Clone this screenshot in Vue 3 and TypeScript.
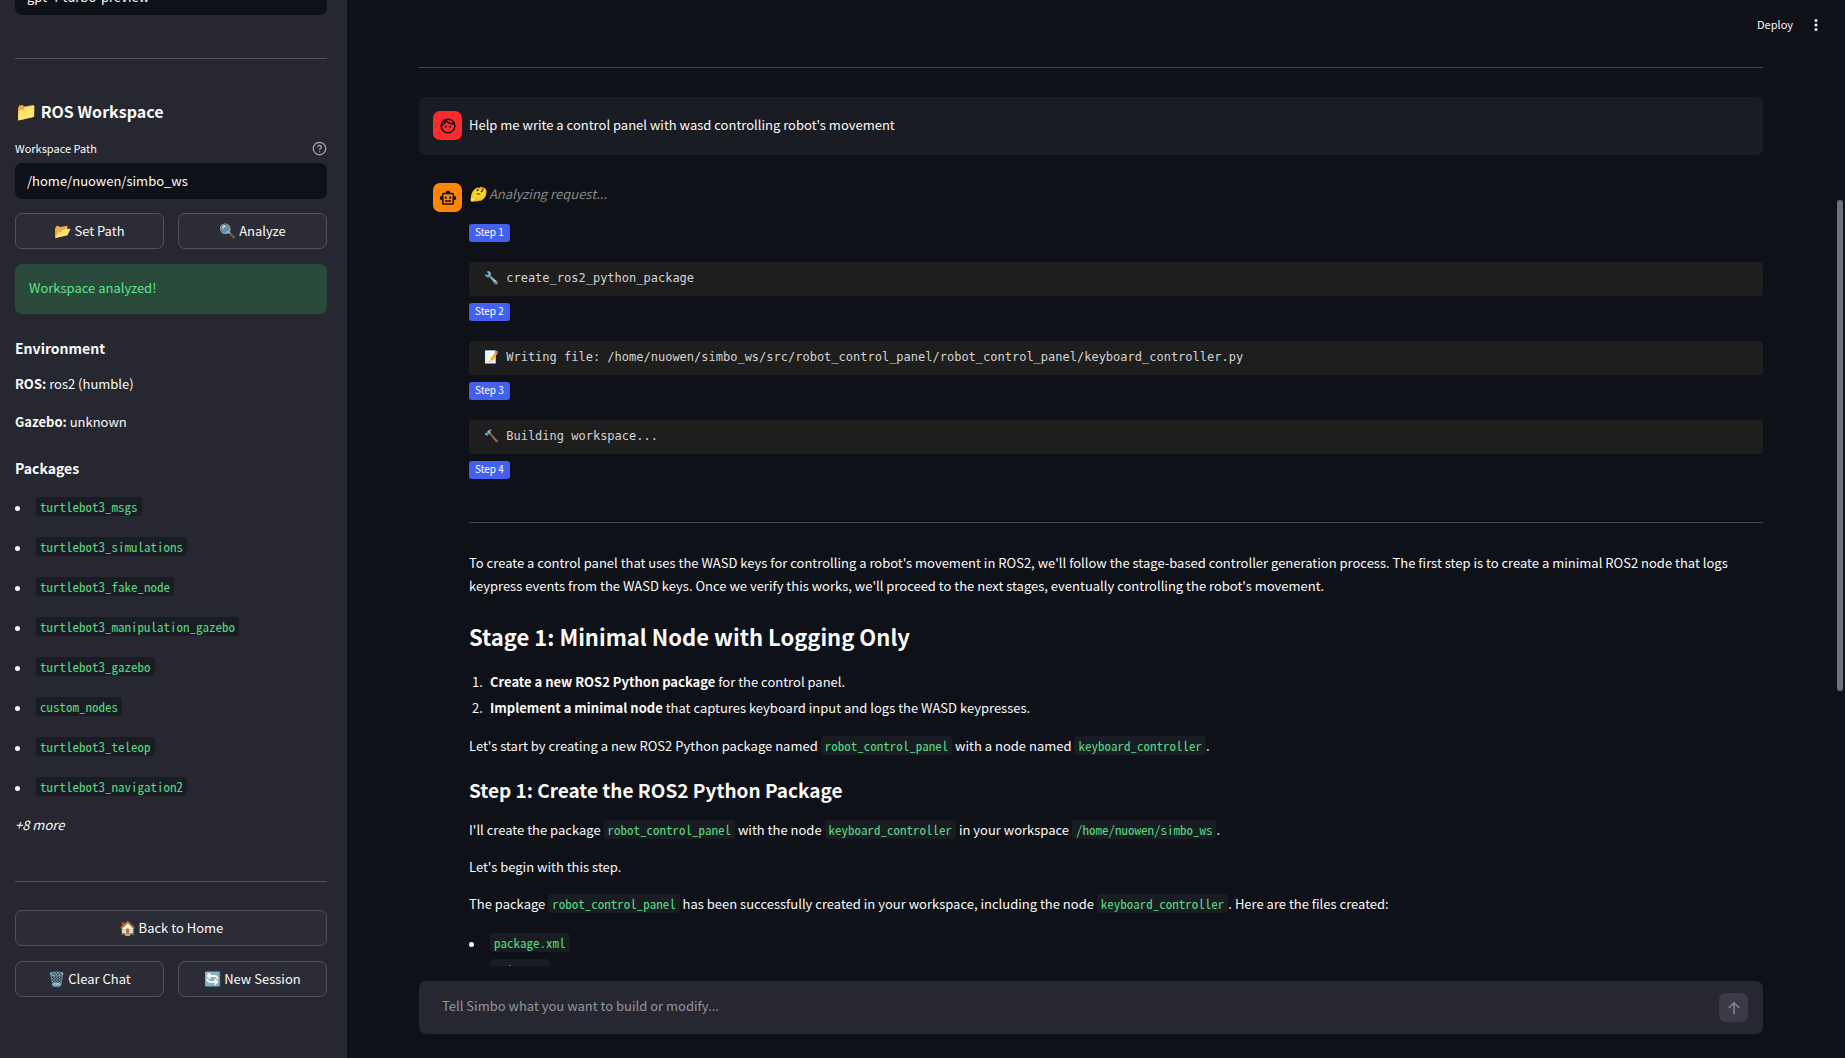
<script setup lang="ts">
import { ref } from 'vue'

interface Step {
  label: string
  icon?: string
  text?: string
}

const model = ref('gpt-4-turbo-preview')
const workspacePath = ref('/home/nuowen/simbo_ws')
const prompt = ref('')

const packages: string[] = [
  'turtlebot3_msgs',
  'turtlebot3_simulations',
  'turtlebot3_fake_node',
  'turtlebot3_manipulation_gazebo',
  'turtlebot3_gazebo',
  'custom_nodes',
  'turtlebot3_teleop',
  'turtlebot3_navigation2',
]

const steps: Step[] = [
  { label: 'Step 1', icon: '🔧', text: 'create_ros2_python_package' },
  {
    label: 'Step 2',
    icon: '📝',
    text: 'Writing file: /home/nuowen/simbo_ws/src/robot_control_panel/robot_control_panel/keyboard_controller.py',
  },
  { label: 'Step 3', icon: '🔨', text: 'Building workspace...' },
  { label: 'Step 4' },
]

const files: string[] = ['package.xml', 'setup.py']
</script>

<template>
  <div class="app">
    <aside class="sidebar">
      <select v-model="model" class="field model" aria-label="Model">
        <option>gpt-4-turbo-preview</option>
      </select>
      <hr />
      <h3><span class="emoji-lg">📁</span> ROS Workspace</h3>
      <div class="label-row">
        <label for="ws-path">Workspace Path</label>
        <svg class="help" viewBox="0 0 24 24" fill="none" stroke="currentColor" stroke-width="2" stroke-linecap="round" stroke-linejoin="round">
          <circle cx="12" cy="12" r="10" />
          <path d="M9.09 9a3 3 0 0 1 5.83 1c0 2-3 3-3 3" />
          <path d="M12 17h.01" />
        </svg>
      </div>
      <input id="ws-path" v-model="workspacePath" class="field" type="text" />
      <div class="button-row">
        <button type="button"><span class="emoji">📂</span> Set Path</button>
        <button type="button"><span class="emoji">🔍</span> Analyze</button>
      </div>
      <div class="success" role="status">Workspace analyzed!</div>
      <h4>Environment</h4>
      <p><strong>ROS:</strong> ros2 (humble)</p>
      <p><strong>Gazebo:</strong> unknown</p>
      <h4>Packages</h4>
      <ul class="packages">
        <li v-for="name in packages" :key="name"><code>{{ name }}</code></li>
      </ul>
      <p class="more"><em>+8 more</em></p>
      <hr class="footer-rule" />
      <div class="button-row">
        <button type="button"><span class="emoji">🏠</span> Back to Home</button>
      </div>
      <div class="button-row">
        <button type="button"><span class="emoji">🗑️</span> Clear Chat</button>
        <button type="button"><span class="emoji">🔄</span> New Session</button>
      </div>
    </aside>

    <main class="main">
      <header class="toolbar">
        <button type="button" class="deploy">Deploy</button>
        <button type="button" class="menu" aria-label="Menu">
          <svg viewBox="0 0 24 24" fill="currentColor">
            <circle cx="12" cy="6" r="2" />
            <circle cx="12" cy="12" r="2" />
            <circle cx="12" cy="18" r="2" />
          </svg>
        </button>
      </header>

      <section class="chat">
        <hr class="top-rule" />

        <article class="message user">
          <div class="avatar red">
            <svg viewBox="0 0 24 24" fill="currentColor">
              <path d="M10.25 13c0 .69-.56 1.25-1.25 1.25S7.75 13.69 7.75 13s.56-1.25 1.25-1.25 1.25.56 1.25 1.25zM15 11.75c-.69 0-1.25.56-1.25 1.25s.56 1.25 1.25 1.25 1.25-.56 1.25-1.25-.56-1.25-1.25-1.25zm7 .25c0 5.52-4.48 10-10 10S2 17.52 2 12 6.48 2 12 2s10 4.48 10 10zM10.66 4.12C12.06 6.44 14.6 8 17.5 8c.46 0 .91-.05 1.34-.12C17.44 5.56 14.9 4 12 4c-.46 0-.91.05-1.34.12zM4.42 9.47c1.71-.97 3.03-2.55 3.66-4.44C6.37 6 5.05 7.58 4.42 9.47zM20 12c0-.78-.12-1.53-.33-2.24-.7.15-1.42.24-2.17.24-3.13 0-5.92-1.44-7.76-3.69C8.69 8.87 6.6 10.88 4 11.86c.01.04 0 .09 0 .14 0 4.42 3.58 8 8 8s8-3.58 8-8z" />
            </svg>
          </div>
          <div class="body">
            <p>Help me write a control panel with wasd controlling robot's movement</p>
          </div>
        </article>

        <article class="message">
          <div class="avatar orange">
            <svg viewBox="0 0 24 24" fill="currentColor">
              <path d="M20 9V7c0-1.1-.9-2-2-2h-3c0-1.66-1.34-3-3-3S9 3.34 9 5H6c-1.1 0-2 .9-2 2v2c-1.66 0-3 1.34-3 3s1.34 3 3 3v4c0 1.1.9 2 2 2h12c1.1 0 2-.9 2-2v-4c1.66 0 3-1.34 3-3s-1.34-3-3-3zm-2 10H6V7h12v12zm-9-6c-.83 0-1.5-.67-1.5-1.5S8.17 10 9 10s1.5.67 1.5 1.5S9.83 13 9 13zm7.5-1.5c0 .83-.67 1.5-1.5 1.5s-1.5-.67-1.5-1.5.67-1.5 1.5-1.5 1.5.67 1.5 1.5zM8 15h8v2H8v-2z" />
            </svg>
          </div>
          <div class="body">
            <p class="thinking"><span class="emoji">🤔</span> Analyzing request...</p>
            <div v-for="step in steps" :key="step.label" class="step">
              <span class="badge">{{ step.label }}</span>
              <div v-if="step.text" class="tool"><span class="tool-icon">{{ step.icon }}</span> {{ step.text }}</div>
            </div>
            <hr />
            <p>
              To create a control panel that uses the WASD keys for controlling a robot's movement in ROS2, we'll follow
              the stage-based controller generation process. The first step is to create a minimal ROS2 node that logs
              keypress events from the WASD keys. Once we verify this works, we'll proceed to the next stages, eventually
              controlling the robot's movement.
            </p>
            <h2>Stage 1: Minimal Node with Logging Only</h2>
            <ol>
              <li><strong>Create a new ROS2 Python package</strong> for the control panel.</li>
              <li><strong>Implement a minimal node</strong> that captures keyboard input and logs the WASD keypresses.</li>
            </ol>
            <p>
              Let's start by creating a new ROS2 Python package named <code>robot_control_panel</code> with a node named
              <code>keyboard_controller</code>.
            </p>
            <h3>Step 1: Create the ROS2 Python Package</h3>
            <p>
              I'll create the package <code>robot_control_panel</code> with the node
              <code>keyboard_controller</code> in your workspace <code>/home/nuowen/simbo_ws</code>.
            </p>
            <p>Let's begin with this step.</p>
            <p>
              The package <code>robot_control_panel</code> has been successfully created in your workspace, including
              the node <code>keyboard_controller</code>. Here are the files created:
            </p>
            <ul>
              <li v-for="file in files" :key="file"><code>{{ file }}</code></li>
            </ul>
          </div>
        </article>
      </section>

      <form class="composer" @submit.prevent>
        <div class="composer-box">
          <input v-model="prompt" type="text" aria-label="Message" placeholder="Tell Simbo what you want to build or modify..." />
          <button type="submit" class="send" aria-label="Send" disabled>
            <svg viewBox="0 0 24 24" fill="none" stroke="currentColor" stroke-width="2">
              <path d="M12 20V5M5 12l7-7 7 7" />
            </svg>
          </button>
        </div>
      </form>
      <div class="scroll-thumb"></div>
    </main>
  </div>
</template>

<style>
body {
  margin: 0;
  background: #0e1117;
}
</style>

<style scoped>
* {
  box-sizing: border-box;
}

.app {
  display: flex;
  height: 100vh;
  overflow: hidden;
  background: #0e1117;
  color: #fafafa;
  font-family: 'Noto Sans CJK SC', 'Noto Sans', sans-serif;
  font-size: 13px;
  line-height: 23px;
}

h2,
h3,
h4,
p,
ul,
ol {
  margin: 0;
  padding: 0;
}

ul,
ol {
  list-style: none;
}

ul li::before {
  content: '';
  display: inline-block;
  width: 5px;
  height: 5px;
  margin-right: 16px;
  border-radius: 50%;
  background: currentColor;
  vertical-align: middle;
}

h2,
h3,
h4,
strong {
  font-weight: 600;
}

hr {
  width: 100%;
  height: 1px;
  margin: 0;
  border: 0;
  background: #41434a;
}

button,
input,
select {
  font: inherit;
  color: inherit;
}

code {
  padding: 0 4px;
  border-radius: 4px;
  background: #1a1c24;
  color: #54da82;
  font-family: 'Noto Sans Mono CJK SC', 'DejaVu Sans Mono', monospace;
  font-size: 13px;
  line-height: 12px;
}

.emoji {
  font-size: 14px;
  line-height: 12px;
}

.emoji-lg {
  font-size: 18px;
  line-height: 16px;
}

/* Sidebar */
.sidebar {
  flex: none;
  display: flex;
  flex-direction: column;
  width: 347px;
  padding: 0 20px 0 15px;
  overflow: hidden;
  background: #262730;
}

.sidebar > * {
  flex: none;
}

.sidebar hr {
  margin-top: 43px;
  background: #51525a;
}

.field {
  width: 100%;
  height: 36px;
  padding: 0 12px 2px;
  border: 0;
  border-radius: 7px;
  outline: 0;
  appearance: none;
  background: #0e1117;
}

.model {
  margin-top: -21px;
}

.sidebar h3 {
  margin-top: 39px;
  font-size: 16px;
  line-height: 26px;
}

.label-row {
  display: flex;
  align-items: center;
  justify-content: space-between;
  height: 22px;
  margin: 13px 0 4px;
  font-size: 11px;
}

.help {
  width: 15px;
  height: 15px;
  color: #a9a9ae;
}

.button-row {
  display: flex;
  gap: 14px;
  margin-top: 15px;
}

.field + .button-row {
  margin-top: 14px;
}

.button-row button {
  flex: 1;
  height: 36px;
  padding: 0 0 2px;
  border: 1px solid #51525a;
  border-radius: 7px;
  background: #2b2c36;
}

.success {
  margin-top: 15px;
  padding: 12px 14px 15px;
  border-radius: 7px;
  background: #2a4a3b;
  color: #5ce488;
}

.sidebar h4 {
  margin-top: 23px;
  font-size: 14px;
}

.sidebar p {
  margin-top: 15px;
}

.sidebar h4 + p {
  margin-top: 12px;
}

.sidebar p + h4 {
  margin-top: 24px;
}

.packages {
  margin-top: 15px;
}

.packages li {
  height: 23px;
  margin-bottom: 17px;
}

.sidebar .more {
  margin-top: -2px;
}

.sidebar .footer-rule {
  margin: 45px 0 13px;
}

/* Main column */
.main {
  position: relative;
  flex: 1;
  display: flex;
  flex-direction: column;
  min-width: 0;
}

.toolbar {
  flex: none;
  display: flex;
  align-items: center;
  justify-content: flex-end;
  gap: 14px;
  height: 50px;
  padding-right: 20px;
}

.toolbar button {
  padding: 0;
  border: 0;
  background: none;
}

.toolbar .deploy {
  padding-bottom: 2px;
  font-size: 11px;
}

.menu {
  width: 18px;
  height: 18px;
}

.menu svg {
  display: block;
  width: 18px;
  height: 18px;
}

.chat {
  flex: 1;
  min-height: 0;
  padding: 17px 82px 0 72px;
  overflow: hidden;
}

.top-rule {
  background: #3f4142;
}

.message {
  display: flex;
  gap: 7px;
  padding: 14px;
  padding-right: 0;
}

.user {
  margin: 29px 0 14px;
  border-radius: 7px;
  background: #1a1c24;
}

.user .body {
  padding: 2px 0 5px;
}

.avatar {
  flex: none;
  display: flex;
  align-items: center;
  justify-content: center;
  width: 29px;
  height: 29px;
  border-radius: 7px;
  color: #0e1117;
}

.avatar svg {
  width: 18px;
  height: 18px;
}

.red {
  background: #ff2b2b;
}

.orange {
  background: #ff8700;
}

.body {
  flex: 1;
  min-width: 0;
}

.thinking {
  margin-bottom: 20px;
  color: #888;
  font-style: italic;
  line-height: 21px;
}

.step {
  display: flex;
  flex-direction: column;
  align-items: flex-start;
  gap: 20px;
  margin-bottom: 7px;
}

.badge {
  padding: 0 6px 2px;
  border-radius: 3px;
  background: #4361ee;
  color: #fff;
  font-size: 10px;
  line-height: 16px;
}

.tool {
  width: 100%;
  padding: 5px 15px 6px;
  border-radius: 3px;
  background: #1e1e1e;
  color: #d4d4d4;
  font-family: 'DejaVu Sans Mono', monospace;
  font-size: 12px;
}

.tool-icon {
  line-height: 12px;
}

.body hr {
  margin: 43px 0 28px;
}

.body h2 {
  margin: 23px 0 18px;
  font-size: 22px;
  line-height: 32px;
}

.body h3 {
  margin: 20px 0 15px;
  font-size: 19px;
  line-height: 26px;
}

.body p + p {
  margin-top: 14px;
}

.body li {
  margin-bottom: 3px;
}

.body ol {
  margin-bottom: 15px;
  counter-reset: item;
}

.body ol li::before {
  counter-increment: item;
  content: counter(item) '.';
  display: inline-block;
  width: 18px;
  padding-left: 3px;
}

.body ul {
  margin-top: 16px;
}

/* Message composer */
.composer {
  flex: none;
  padding: 15px 82px 24px 72px;
}

.composer-box {
  display: flex;
  align-items: center;
  height: 53px;
  padding: 0 15px 0 23px;
  border-radius: 7px;
  background: #262730;
}

.composer input {
  flex: 1;
  min-width: 0;
  padding: 0 0 4px;
  border: 0;
  outline: 0;
  background: none;
}

.composer input::placeholder {
  color: #94959b;
  opacity: 1;
}

.send {
  display: flex;
  align-items: center;
  justify-content: center;
  width: 29px;
  height: 29px;
  padding: 0;
  border: 0;
  border-radius: 7px;
  background: #3b3b47;
  color: #85868d;
}

.send svg {
  width: 18px;
  height: 18px;
}

.scroll-thumb {
  position: absolute;
  top: 200px;
  right: 2px;
  width: 6px;
  height: 491px;
  border-radius: 3px;
  background: #6f7074;
}
</style>
